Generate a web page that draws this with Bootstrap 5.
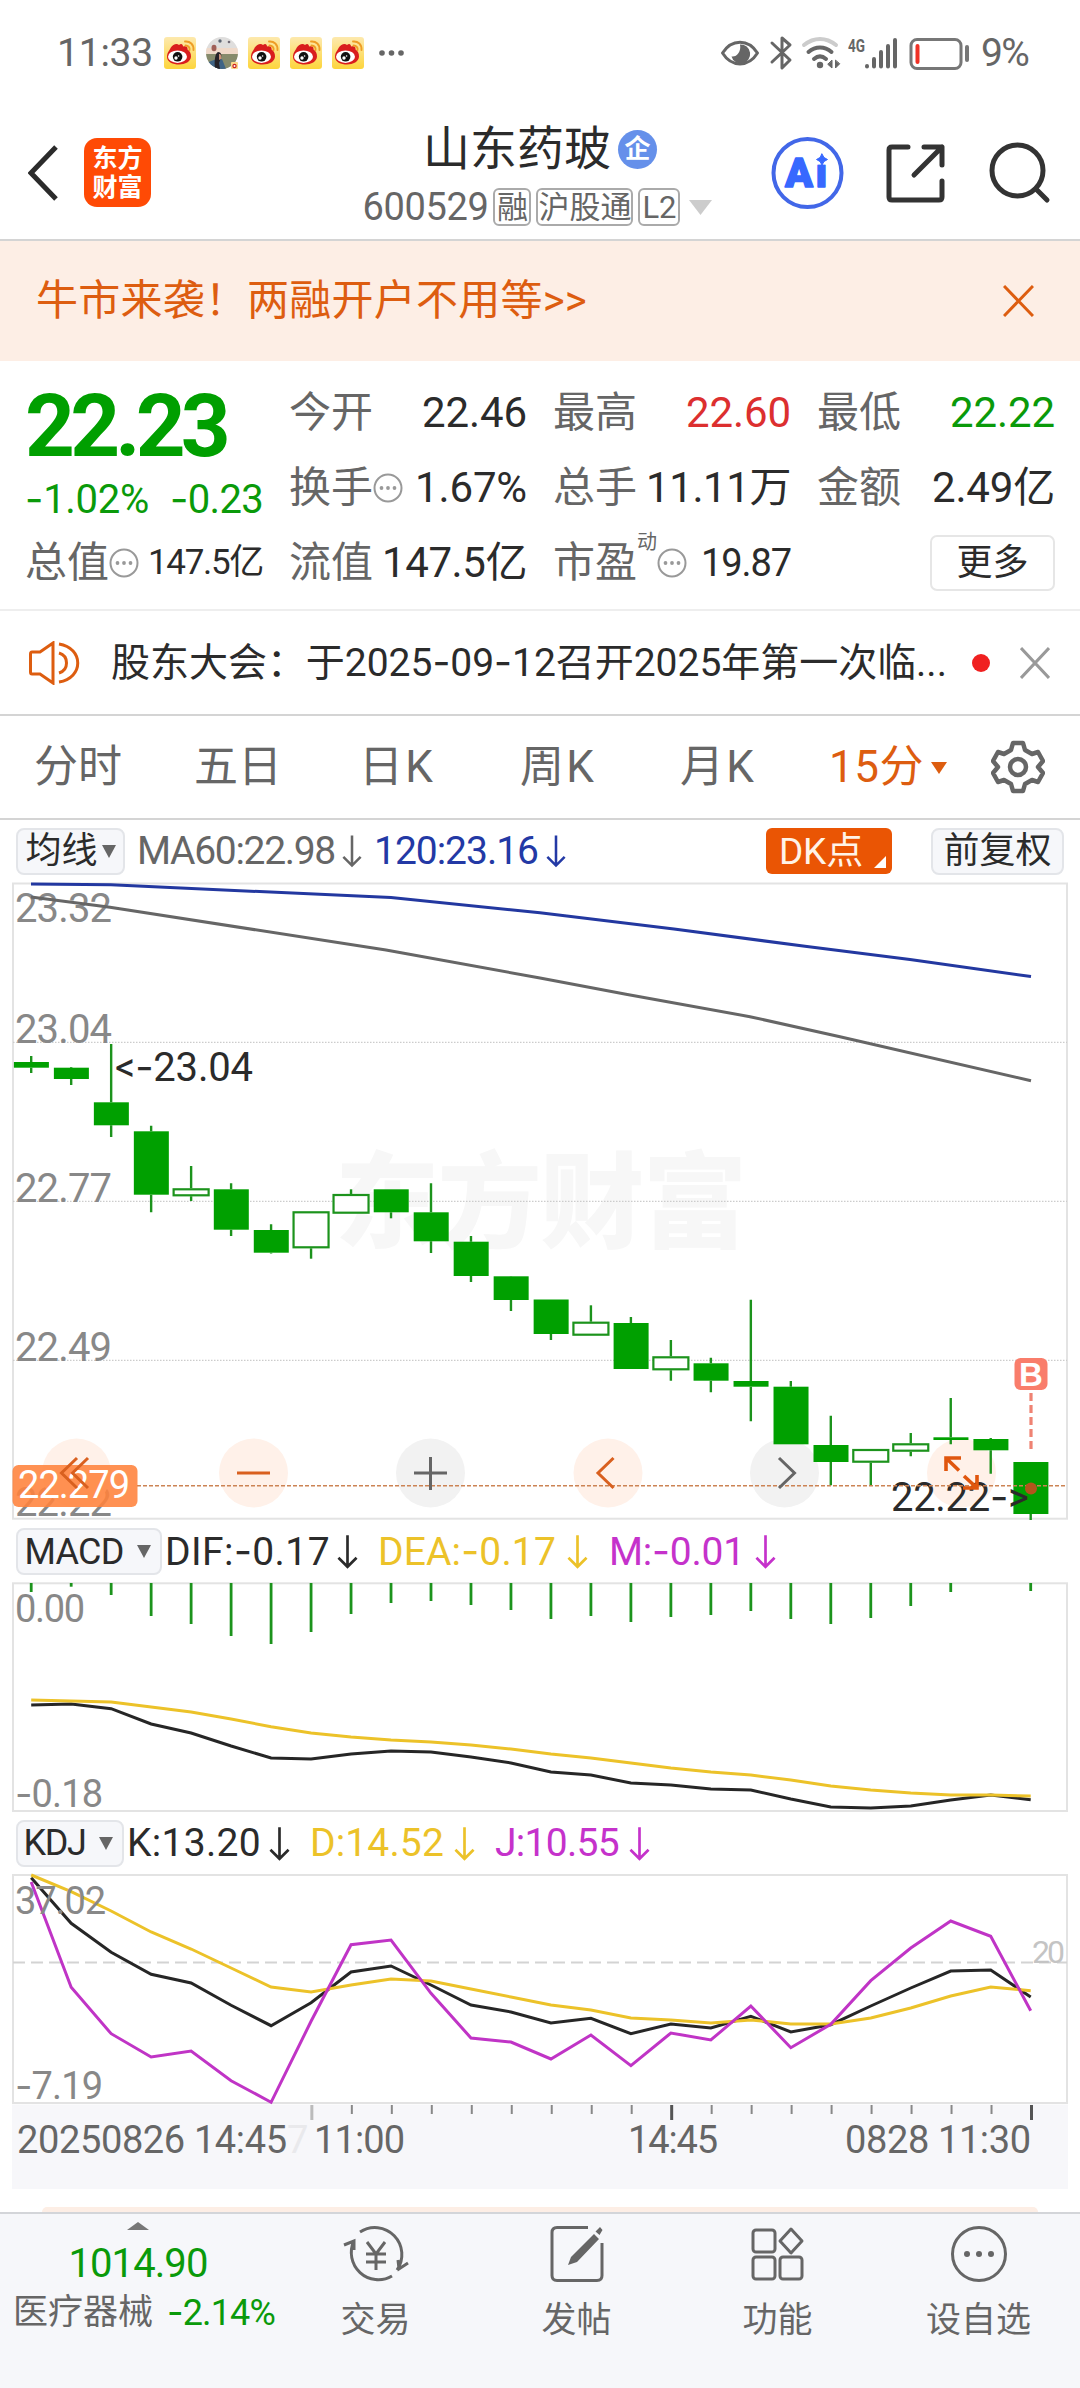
<!DOCTYPE html>
<html lang="zh-CN">
<head>
<meta charset="utf-8">
<meta name="viewport" content="width=device-width, initial-scale=1">
<title>山东药玻 600529</title>
<link href="https://cdn.jsdelivr.net/npm/bootstrap@5.3.0/dist/css/bootstrap.min.css" rel="stylesheet">
<style>
:root{--ink:#2b2b2b;--sub:#666;--up:#dc2f2f;--down:#0a9a0a;--brand:#ea5504;--rule:#d4d4d4}
body{width:1080px;height:2388px;overflow:hidden;background:#fff;color:var(--ink);font-family:Roboto,"Noto Sans CJK SC",sans-serif;line-height:1}
svg{display:block;flex:none}
.hy{font-family:Inter,sans-serif;font-style:normal}
[data-w]{white-space:nowrap;display:inline-block}
.statusbar{height:106px;padding:0 52px 0 57px;color:var(--sub);font-size:39px}
.titlebar{height:135px;border-bottom:2px solid var(--rule);padding:0 28px}
.logo{width:67px;height:69px;border-radius:13px;background:#ff4a05;color:#fff;font-weight:700;font-size:25px;line-height:29px}
.stockname{font-size:47px;height:48px}
.qi{width:39px;height:39px;border-radius:50%;background:#6590ea;color:#fff;font-size:26px;font-weight:700}
.code{font-size:38px;color:var(--sub)}
.tagbox{height:38px;border:2px solid #aaa;border-radius:6px;color:var(--sub);font-size:31px}
.promo{height:120px;background:#fdeee5;color:#dd5d10;padding:0 46px 0 36px;font-size:42px}
.quote{height:250px;padding:14px 25px 0 25px;gap:26px;border-bottom:2px solid #eee}
.qcol{width:238px}
.qrow{height:75px;font-size:42px}
.lab{color:var(--sub)}
.price{font-size:87px;font-weight:700;height:94px;color:#009f00}
.pct{font-size:40px;height:56px;padding-top:5px;color:var(--down)}
.green{color:var(--down)}.red{color:var(--up)}
.more{width:125px;height:56px;border:2px solid #e6e6e6;border-radius:7px;font-size:36px}
.notice{height:105px;border-bottom:2px solid var(--rule);padding:0 30px 0 29px;font-size:39px}
.dot{width:18px;height:18px;border-radius:50%;background:#f02020}
.periods{height:104px;border-bottom:2px solid var(--rule);padding:0 35px 0 34px;font-size:44px;color:var(--sub)}
.ind{padding:0 16px;font-size:39px}
.pick{height:47px;border:2px solid #e3e5e9;border-radius:8px;background:#f6f7fa;font-size:36px}
.dk{width:126px;height:46px;border-radius:6px;background:var(--brand);color:#fff3e8;font-size:37px}
.dk i{position:absolute;right:6px;bottom:6px;border:6px solid transparent;border-right-color:#fff;border-bottom-color:#fff}
.tri{width:0;height:0;border:7px solid transparent;border-bottom:0;border-top:13px solid #666}
.yl{color:#ecc229}.mg{color:#c532cb}.bl{color:#2339a5}.gy{color:var(--sub)}
.peach{height:5px;margin:18px 42px 0;background:#fdeee5;border-radius:18px 18px 0 0}
.tabbar{height:176px;background:#f6f7fa;border-top:2px solid #d3d5d9;font-size:35px;color:var(--sub)}
.sector{width:275px;padding-left:13px}
.navitem{width:201px;padding-top:11px}
.navitem span{margin-top:20px}
</style>
<script src="https://cdn.jsdelivr.net/npm/bootstrap@5.3.0/dist/js/bootstrap.bundle.min.js"></script>
</head>
<body>
<svg width="0" height="0" class="position-absolute">
  <defs>
    <linearGradient id="wbg" x2="0" y2="1"><stop stop-color="#fde9ae"/><stop offset="1" stop-color="#fdd53c"/></linearGradient>
    <symbol id="wb" viewBox="0 0 32 32">
      <rect width="32" height="32" rx="3" fill="url(#wbg)"/>
      <path d="M3 20c0-5 3-7 3.500-9C9 7 13 6 15 8c2-2 4-1 4 1.500 3-1 5 0 4.500 3 2.500 1.500 3.500 4 3.500 7 0 5-6 8-12 8S3 25 3 20z" fill="#d91d1d"/>
      <ellipse cx="13.500" cy="19.700" rx="9.500" ry="6.200" fill="#fff"/>
      <circle cx="13.600" cy="19.800" r="4.800" fill="#111"/><circle cx="12" cy="21" r="1.700" fill="#fff"/><circle cx="14.600" cy="19" r=".8" fill="#fff"/>
      <path d="M21 4.500c5-.5 9 3 8.500 8.500M21.500 8.500c3 0 4.500 2 4 4.500" fill="none" stroke="#ee9d26" stroke-width="1.900" stroke-linecap="round"/>
    </symbol>
    <symbol id="dn" viewBox="0 0 22 36"><path d="M11 1v33M1.500 24.500L11 34l9.500-9.500" fill="none" stroke="currentColor" stroke-width="2.800"/></symbol>
    <symbol id="info" viewBox="0 0 30 30"><circle cx="15" cy="15" r="13.500" fill="none" stroke="#999" stroke-width="2"/><g fill="#999"><circle cx="8.500" cy="15" r="1.900"/><circle cx="15" cy="15" r="1.900"/><circle cx="21.500" cy="15" r="1.900"/></g></symbol>
  </defs>
</svg>

<header>
  <div class="statusbar d-flex align-items-center justify-content-between">
    <div class="d-flex align-items-center">
      <span data-w="96" class="me-2">11:33</span>
      <div class="d-flex" style="gap:10px;margin-left:3px">
        <svg width="32" height="32"><use href="#wb"/></svg>
        <svg width="32" height="32" viewBox="0 0 32 32"><defs><clipPath id="av"><circle cx="16" cy="16" r="16"/></clipPath></defs><g clip-path="url(#av)"><rect width="32" height="17" fill="#dfdedd"/><rect y="11" width="32" height="6" fill="#efd9c9"/><rect y="17" width="32" height="15" fill="#868b6c"/><path d="M0 32v-6l8-3 8-1 4 10z" fill="#3f6486"/><path d="M9 32c-1-8 0-16 3-17 3 0 4 3 3 6l-2 5 1 6z" fill="#252228"/><path d="M13 17c2 0 3 2 2 5l-2 1z" fill="#c9927a"/></g><ellipse cx="8" cy="11" rx="2.500" ry="3.200" fill="#a06058"/><circle cx="14" cy="4" r="1.700" fill="#5d6673"/><circle cx="23" cy="5" r="1.300" fill="#706a75"/><rect x="25" y="25" width="7" height="7" rx="1" fill="#fcd98a"/><circle cx="28.500" cy="29" r="2.200" fill="#c22"/><circle cx="28.500" cy="29" r="1" fill="#fff"/></svg>
        <svg width="32" height="32"><use href="#wb"/></svg><svg width="32" height="32"><use href="#wb"/></svg><svg width="32" height="32"><use href="#wb"/></svg>
      </div>
      <svg width="40" height="32" fill="#666"><circle cx="18" cy="16" r="2.800"/><circle cx="27.500" cy="16" r="2.800"/><circle cx="37" cy="16" r="2.800"/></svg>
    </div>
    <div class="d-flex align-items-center">
      <svg width="257" height="40" viewBox="721 33 257 40" fill="none" stroke="#666" stroke-width="3" stroke-linecap="round" stroke-linejoin="round">
        <path d="M723.500 53c9-14.500 26-14.500 35 0-9 14.500-26 14.500-35 0z"/>
        <path d="M741 44.500a9.500 9.500 0 1 1-8.500 12c5 1 10-5 8.500-12z" fill="#666" stroke="none"/>
        <path d="M773 43l18 17-8 8V38l8 7-18 17"/>
        <path d="M805 45c10-8 22-8 32 0" stroke="#ccc" stroke-width="4"/><path d="M809.500 52c7-6 16-6 23 0M815 59c4-3.500 8-3.500 12 0" stroke-width="4"/><circle cx="821" cy="65" r="3.200" fill="#666" stroke="none"/><path d="M833 60.500v7.500l-4-3.500zM836.500 60.500v7.500l4-4z" fill="#666" stroke-width="1"/>
        <text x="849" y="52" font-size="19" font-weight="700" fill="#666" stroke="none" textLength="17" lengthAdjust="spacingAndGlyphs">4G</text>
        <path d="M868 66v.5M875 59v7.500M882 52v14.500M889 46v20.500M896 40v26.500" stroke-width="4"/>
        <rect x="912" y="39.500" width="50" height="29" rx="6" stroke="#777"/><path d="M968 47v13" stroke="#777" stroke-width="4"/><path d="M918.500 46v16" stroke="#f03226" stroke-width="4"/>
      </svg>
      <span data-w="47" class="ms-1">9%</span>
    </div>
  </div>
  <div class="titlebar d-flex align-items-center justify-content-between">
    <div class="d-flex align-items-center" style="gap:26px">
      <svg width="30" height="56" viewBox="0 0 30 56"><path d="M28 2L3 28l25 26" fill="none" stroke="#2b2b2b" stroke-width="5"/></svg>
      <div class="logo d-flex flex-column align-items-center justify-content-center"><span>东方</span><span>财富</span></div>
    </div>
    <div class="d-flex flex-column align-items-center" style="gap:15px;margin-left:160px;margin-top:6px">
      <div class="d-flex align-items-center" style="gap:7px"><span class="stockname">山东药玻</span><span class="qi d-flex align-items-center justify-content-center">企</span></div>
      <div class="d-flex align-items-center" style="gap:5px;margin-right:4px">
        <span class="code" data-w="126">600529</span>
        <span class="tagbox d-flex align-items-center justify-content-center" style="width:38px">融</span>
        <span class="tagbox d-flex align-items-center justify-content-center" style="width:97px">沪股通</span>
        <span class="tagbox d-flex align-items-center justify-content-center" style="width:42px"><span data-w="34">L2</span></span>
        <svg width="28" height="16"><path d="M4 1h23L15.500 16z" fill="#ccc"/></svg>
      </div>
    </div>
    <svg width="283" height="80" viewBox="770 133 283 80" fill="none" stroke="#333" stroke-width="5" stroke-linecap="round" stroke-linejoin="round">
      <circle cx="808.500" cy="173" r="34" stroke="#4267e8" stroke-width="4"/>
      <text x="786" y="187" font-size="41" font-weight="900" fill="#3768ff" stroke="#3768ff" stroke-width="1.500" font-family="Roboto" textLength="42">Ai</text>
      <rect x="815" y="150" width="16" height="14.500" fill="#fff" stroke="none"/><path d="M823 154l2 3.500 3.500 2-3.500 2-2 3.500-2-3.500-3.500-2 3.500-2z" fill="#3768ff" stroke="#3768ff" stroke-width="1"/>
      <path d="M909 147h-16q-3 0-3 3v47q0 3 3 3h47q3 0 3-3v-16M925 147h18v18M943 147l-28 28"/>
      <circle cx="1018.500" cy="170.500" r="25.500"/><path d="M1037 189l11 11"/>
    </svg>
  </div>
</header>

<div class="promo d-flex align-items-center justify-content-between">
  <span data-w="551">牛市来袭！两融开户不用等&gt;&gt;</span>
  <svg width="31" height="32"><path d="M1 1l29 30M30 1L1 31" stroke="#dd5d10" stroke-width="3"/></svg>
</div>

<section class="quote d-flex">
  <div class="qcol">
    <div class="price d-flex align-items-center pt-2"><span data-w="201">22.23</span></div>
    <div class="pct d-flex align-items-center justify-content-between"><span data-w="124"><i class="hy">-</i>1.02%</span><span data-w="93"><i class="hy">-</i>0.23</span></div>
    <div class="qrow d-flex align-items-center justify-content-between"><span class="lab d-flex align-items-center">总值<svg width="30" height="30"><use href="#info"/></svg></span><span data-w="115" style="font-size:35px">147.5亿</span></div>
  </div>
  <div class="qcol">
    <div class="qrow d-flex align-items-center justify-content-between"><span class="lab">今开</span><span data-w="105">22.46</span></div>
    <div class="qrow d-flex align-items-center justify-content-between"><span class="lab d-flex align-items-center">换手<svg width="30" height="30"><use href="#info"/></svg></span><span data-w="112">1.67%</span></div>
    <div class="qrow d-flex align-items-center justify-content-between"><span class="lab">流值</span><span data-w="145">147.5亿</span></div>
  </div>
  <div class="qcol">
    <div class="qrow d-flex align-items-center justify-content-between"><span class="lab">最高</span><span class="red" data-w="105">22.60</span></div>
    <div class="qrow d-flex align-items-center justify-content-between"><span class="lab">总手</span><span data-w="145">11.11万</span></div>
    <div class="qrow d-flex align-items-center justify-content-between"><span class="lab d-flex align-items-center">市盈<span class="align-self-start" style="font-size:20px;margin-top:-10px">动</span><svg width="30" height="30"><use href="#info"/></svg></span><span data-w="90" style="font-size:38px">19.87</span></div>
  </div>
  <div class="qcol">
    <div class="qrow d-flex align-items-center justify-content-between"><span class="lab">最低</span><span class="green" data-w="105">22.22</span></div>
    <div class="qrow d-flex align-items-center justify-content-between"><span class="lab">金额</span><span data-w="123">2.49亿</span></div>
    <div class="qrow d-flex align-items-center justify-content-end"><span class="more d-flex align-items-center justify-content-center">更多</span></div>
  </div>
</section>

<section class="notice d-flex align-items-center">
  <svg width="52" height="44" viewBox="0 0 52 44" fill="none" stroke="#dd5d10" stroke-width="3"><path d="M3 11h8L24 2v40L11 33H3q-1.500 0-1.500-2V13q0-2 1.500-2zM30 12c10 3 10 17 0 20M30 3c25 4 25 34 0 38"/></svg>
  <span data-w="836" style="margin-left:30px">股东大会：于2025<i class="hy">-</i>09<i class="hy">-</i>12召开2025年第一次临...</span>
  <span class="dot" style="margin-left:25px"></span>
  <svg class="ms-auto" width="30" height="32"><path d="M1 1l28 30M29 1L1 31" stroke="#999" stroke-width="3"/></svg>
</section>

<nav class="periods d-flex align-items-center">
  <span style="width:160px">分时</span><span style="width:165px">五日</span><span style="width:161px"><span data-w="76">日K</span></span><span style="width:160px"><span data-w="76">周K</span></span><span style="width:149px"><span data-w="76">月K</span></span>
  <span class="d-flex align-items-center" style="color:#dd5d10"><span data-w="95">15分</span><svg width="17" height="13" style="margin-left:7px"><path d="M0 1h16L8 13z" fill="#dd5d10"/></svg></span>
  <svg class="ms-auto" width="54" height="54" viewBox="0 0 54 54" fill="none" stroke="#666" stroke-width="4.500" stroke-linejoin="round"><path d="M22 3h10l2 7 7 4 6-2 5 9-5 6 5 6-5 9-6-2-7 4-2 7H22l-2-7-7-4-6 2-5-9 5-6-5-6 5-9 6 2 7-4z"/><circle cx="27" cy="27" r="8"/></svg>
</nav>

<section>
  <div class="ind d-flex align-items-center" style="height:62px">
    <span class="pick d-flex align-items-center justify-content-center" style="width:109px">均线<span class="tri" style="margin-left:4px"></span></span>
    <span class="gy" data-w="198" style="margin-left:12px">MA60:22.98</span><svg class="gy" style="margin-left:7px" width="20" height="34"><use href="#dn"/></svg>
    <span class="bl" data-w="164" style="margin-left:12px">120:23.16</span><svg class="bl" style="margin-left:8px" width="20" height="34"><use href="#dn"/></svg>
    <span class="dk position-relative d-flex align-items-center ps-3 ms-auto"><span data-w="84" style="margin-left:-3px">DK点</span><i></i></span>
    <span class="pick d-flex align-items-center justify-content-center" style="width:133px;margin-left:39px">前复权</span>
  </div>
  <svg id="kline" width="1080" height="639" viewBox="0 882 1080 639"></svg>

  <div class="ind d-flex align-items-center" style="height:61px">
    <span class="pick d-flex align-items-center justify-content-center" style="width:146px"><span data-w="99">MACD</span><span class="tri" style="margin-left:13px;margin-right:3px"></span></span>
    <span data-w="165" style="margin-left:3px">DIF:<i class="hy">-</i>0.17</span><svg style="margin-left:7px" width="21" height="35"><use href="#dn"/></svg>
    <span class="yl" data-w="178" style="margin-left:20px">DEA:<i class="hy">-</i>0.17</span><svg class="yl" style="margin-left:11px" width="21" height="35"><use href="#dn"/></svg>
    <span class="mg" data-w="136" style="margin-left:21px">M:<i class="hy">-</i>0.01</span><svg class="mg" style="margin-left:10px" width="21" height="35"><use href="#dn"/></svg>
  </div>
  <svg id="macd" width="1080" height="231" viewBox="0 1582 1080 231"></svg>

  <div class="ind d-flex align-items-center" style="height:60px">
    <span class="pick d-flex align-items-center justify-content-center" style="width:108px"><span data-w="62">KDJ</span><span class="tri" style="margin-left:13px;margin-right:4px"></span></span>
    <span data-w="134" style="margin-left:3px">K:13.20</span><svg style="margin-left:8px" width="21" height="35"><use href="#dn"/></svg>
    <span class="yl" data-w="134" style="margin-left:20px">D:14.52</span><svg class="yl" style="margin-left:10px" width="21" height="35"><use href="#dn"/></svg>
    <span class="mg" data-w="124" style="margin-left:20px">J:10.55</span><svg class="mg" style="margin-left:10px" width="21" height="35"><use href="#dn"/></svg>
  </div>
  <svg id="kdj" width="1080" height="316" viewBox="0 1873 1080 316"></svg>
</section>
<div class="peach"></div>

<footer class="tabbar d-flex">
  <div class="sector">
    <svg class="mx-auto" style="margin-top:8px;transform:translateX(-6px)" width="22" height="8"><path d="M0 8L11 0l11 8z" fill="#777"/></svg>
    <div class="text-center green" style="font-size:40px;margin-top:14px;margin-left:-12px"><span data-w="139">1014.90</span></div>
    <div class="d-flex align-items-center" style="margin-top:10px"><span>医疗器械</span><span class="green ms-auto" data-w="108" style="font-size:36px"><i class="hy">-</i>2.14%</span></div>
  </div>
  <div class="navitem d-flex flex-column align-items-center">
    <svg width="66" height="58" viewBox="0 0 66 58" fill="none" stroke="#666" stroke-width="3"><path d="M17 7a27 27 0 0 1 37 38M49 51A27 27 0 0 1 11 16M1 20l10-4v9M65 38l-9 6-1-9M24 17l9 12 9-12M33 29v16M23 29h20M23 37h20"/></svg><span>交易</span>
  </div>
  <div class="navitem d-flex flex-column align-items-center">
    <svg width="56" height="58" viewBox="0 0 56 58" fill="none" stroke="#666" stroke-width="3"><path d="M39 2.500H8q-5 0-5 5v43q0 5 5 5h40q5 0 5-5V18"/><path d="M45 9l5 5-22 23-9 3 3-8zM46.500 6.500L51 2l2.500 3-3 5z" fill="#666" stroke="none"/></svg><span>发帖</span>
  </div>
  <div class="navitem d-flex flex-column align-items-center">
    <svg width="54" height="58" viewBox="0 0 54 58" fill="none" stroke="#666" stroke-width="3"><rect x="2" y="5" width="22" height="22" rx="3"/><rect x="2" y="32" width="22" height="22" rx="3"/><rect x="29" y="32" width="22" height="22" rx="3"/><path d="M40 4l11 12-11 12-11-12z" stroke-linejoin="round"/></svg><span>功能</span>
  </div>
  <div class="navitem d-flex flex-column align-items-center">
    <svg width="58" height="58" viewBox="0 0 58 58"><circle cx="29" cy="29" r="26.500" fill="none" stroke="#666" stroke-width="3"/><g fill="#666"><circle cx="17" cy="29" r="3"/><circle cx="29" cy="29" r="3"/><circle cx="41" cy="29" r="3"/></g></svg><span>设自选</span>
  </div>
</footer>

<script>
const X = i => 31.2 + 39.98 * i;
const G = '#00a000', W = '#1c931c';
const line = (ys, c, w = 3) => `<polyline points="${ys.map((y, i) => X(i) + ',' + y).join(' ')}" fill="none" stroke="${c}" stroke-width="${w}"/>`;
const txt = (x, base, w, s, c = '#888', size = 40) => `<text x="${x}" y="${base}" font-size="${size}" fill="${c}" textLength="${w}">${s.replace(/-/g, '<tspan font-family="Inter">-</tspan>')}</text>`;
const frame = (t, b) => `<rect x="13" y="${t}" width="1054" height="${b - t}" fill="none" stroke="#e3e3e3" stroke-width="2"/>`;

/* high, body top, body bottom, low, hollow flag */
const candles = [
 [1056,1062,1067.7,1073],[1067,1067.7,1079,1085],[1044,1102.3,1125.3,1137],[1125.7,1131.3,1194.7,1212.3],
 [1166,1188.3,1196.3,1201,1],[1183.3,1189.3,1229.7,1236],[1224.3,1230,1252.7,1253.5],[1211.3,1211.3,1248.3,1258.7,1],
 [1189.3,1194,1213.7,1213.7,1],[1189.3,1189.3,1212.3,1218.3],[1183.3,1212.3,1241.3,1253],[1236,1241.7,1276,1282],
 [1276,1276.3,1300,1311],[1299.5,1299.5,1334,1340],[1305.3,1321.7,1335.7,1335.7,1],[1317,1323,1369,1369],
 [1340,1356.3,1370.3,1380.7,1],[1357.7,1363.3,1380.7,1392.3],[1299.7,1381,1386.7,1421.3],[1381,1386.7,1444.3,1444.3],
 [1415.7,1445,1462,1485.3],[1449,1449,1462.7,1485.3,1],[1433,1443.3,1451.7,1456.3,1],[1398,1437.3,1440,1444.3],
 [1438,1439,1450.3,1473.7],[1462,1462,1514,1520]];
let k = `<text x="335" y="1240" font-size="104" font-weight="800" fill="#f7f7f7" textLength="412">东方财富</text>`;
k += frame(883.5, 1518.7);
[1042.3, 1201.3, 1360.3].forEach(y => k += `<path d="M13 ${y}H1067" stroke="#ccc" stroke-width="1.300" stroke-dasharray="1.500 1.500"/>`);
k += txt(15, 922, 97, '23.32') + txt(15, 1042.5, 97, '23.04') + txt(15, 1202, 97, '22.77') + txt(15, 1361, 97, '22.49') + txt(15, 1516, 97, '22.22');
[[76.5,0],[253.5,0],[430.5,1],[608,0],[784.5,1],[961.5,0]].forEach(([x, g]) => k += `<circle cx="${x}" cy="1473" r="34.500" fill="${g ? '#f2f2f2' : '#fff1e9'}"/>`);
k += `<polyline points="31,884 111,884.800 391,897.500 540,912.800 674,929 805,946.300 910,959.500 1031,976.500" fill="none" stroke="#2338a0" stroke-width="3"/>`;
k += `<polyline points="31,897 110,907.300 386,950 540,978 626,994.300 750,1016.700 840,1036.700 1031,1080.700" fill="none" stroke="#666" stroke-width="3"/>`;
candles.forEach(([h, t, b, l, o], i) => {
  const x = X(i);
  k += `<path d="M${x} ${h}V${t}M${x} ${b}V${l}" stroke="${W}" stroke-width="2.400"/>`;
  k += o ? `<rect x="${x - 17.5}" y="${t + 1}" width="35" height="${b - t - 2}" fill="#fff" stroke="${W}" stroke-width="2.200"/>`
         : `<rect x="${x - 17.3}" y="${t}" width="35" height="${b - t}" fill="${G}"/>`;
});
k += txt(115, 1081, 138, '&lt;-23.04', '#2b2b2b') + txt(891, 1511, 138, '22.22-&gt;', '#2b2b2b');
k += `<path d="M137 1485.700H1067" stroke="#cc8354" stroke-width="1.500" stroke-dasharray="4 2"/>`;
k += `<rect x="12.500" y="1465" width="125" height="42" rx="6" fill="#ff823b" fill-opacity=".88"/>` + txt(18, 1498, 112, '22.279', '#fff', 38);
k += `<g fill="none" stroke="#d9601f" stroke-width="3"><path d="M77 1458l-15.500 15 15.500 15M88 1458l-15.500 15 15.500 15M237 1473h33M613.500 1458l-15.500 15 15.500 15"/><g stroke="#e0560e"><path d="M946 1471v-13h15M946.500 1458.500l12.500 12M963 1488h14v-13M964 1476l13 12" stroke-width="3.600"/></g><path d="M414 1473h33M430.500 1457v33M779 1458l15.500 15-15.500 15" stroke="#666"/></g>`;
k += `<rect x="1014.500" y="1358" width="33" height="32" rx="6" fill="#f97d6b"/><text x="1031" y="1385.500" font-size="33" font-weight="700" font-family="Liberation Sans" fill="#fff" text-anchor="middle">B</text>`;
k += `<path d="M1031 1393v56" stroke="#ef8373" stroke-width="3.200" stroke-dasharray="8 4"/><circle cx="1031" cy="1488.500" r="6" fill="#b3551c"/>`;
kline.innerHTML = k;

const hist = [1592,1586.7,1595,1616,1624,1636,1644,1632,1614,1603,1601,1605,1610,1619,1616,1622,1617,1615,1611,1619,1624,1618,1606,1592,1583,1591];
const at = (o, a) => a.map(v => +(o + v / 3).toFixed(1));
macd.innerHTML = frame(1583.3, 1811) + txt(15, 1622, 70, '0.00', '#888', 38) + txt(15, 1807, 88, '-0.18', '#888', 38) +
  hist.map((y, i) => `<path d="M${X(i)} 1583V${y}" stroke="${W}" stroke-width="2.800"/>`).join('') +
  line(at(1570, [405,402,416,462,489,528,564,567,552,543,546,561,579,606,615,639,645,657,660,687,711,714,708,690,675,689]), '#262626') +
  line(at(1570, [390,393,396,411,426,447,470,489,501,510,516,525,537,552,564,579,594,606,615,630,648,660,669,675,675,678]), '#ecc229');

let ticks = '';
for (let i = 7; i < 26; i++) {
  const big = i === 7 || i === 16 || i === 25;
  ticks += `<path d="M${X(i) + .8} 2105v${big ? 15 : 9}" stroke="${i === 7 ? '#bbb' : big ? '#555' : '#888'}" stroke-width="${big ? 3 : 2}"/>`;
}
kdj.innerHTML = `<rect x="12" y="2104.500" width="1056" height="84.500" fill="#f7f7fa"/>` + frame(1875, 2103) +
  `<path d="M13 1962.400H1067" stroke="#d3d3d3" stroke-width="2" stroke-dasharray="12 6"/>` +
  line(at(1860, [53,190,277,343,369,436,497,428,336,318,375,435,456,489,475,521,492,504,469,516,494,438,384,333,330,411]), '#262626') +
  line(at(1860, [45,95,153,216,267,324,381,396,375,357,363,387,411,435,450,474,480,489,480,492,492,474,444,408,381,392]), '#ecc229') +
  line(at(1860, [66,382,521,591,573,662,727,484,254,240,400,534,546,597,525,617,519,540,438,563,493,362,264,183,229,452]), '#c034c6') +
  txt(15, 1914, 91, '37.02', '#888', 38) + txt(15, 2099, 88, '-7.19', '#888', 38) + txt(1032, 1963, 33, '20', '#c4c4c4', 32) + ticks +
  txt(287, 2153, 14, '7', '#e9e9ec', 38) +
  txt(17, 2153, 270, '20250826 14:45', '#666', 38) + txt(314, 2153, 91, '11:00', '#666', 38) + txt(628, 2153, 90, '14:45', '#666', 38) + txt(845, 2153, 186, '0828 11:30', '#666', 38);

document.querySelectorAll('[data-w]').forEach(e => {
  const w = +e.dataset.w, n = e.getBoundingClientRect().width;
  e.style.letterSpacing = ((w - n) / e.textContent.length).toFixed(2) + 'px';
});
</script>
</body>
</html>
